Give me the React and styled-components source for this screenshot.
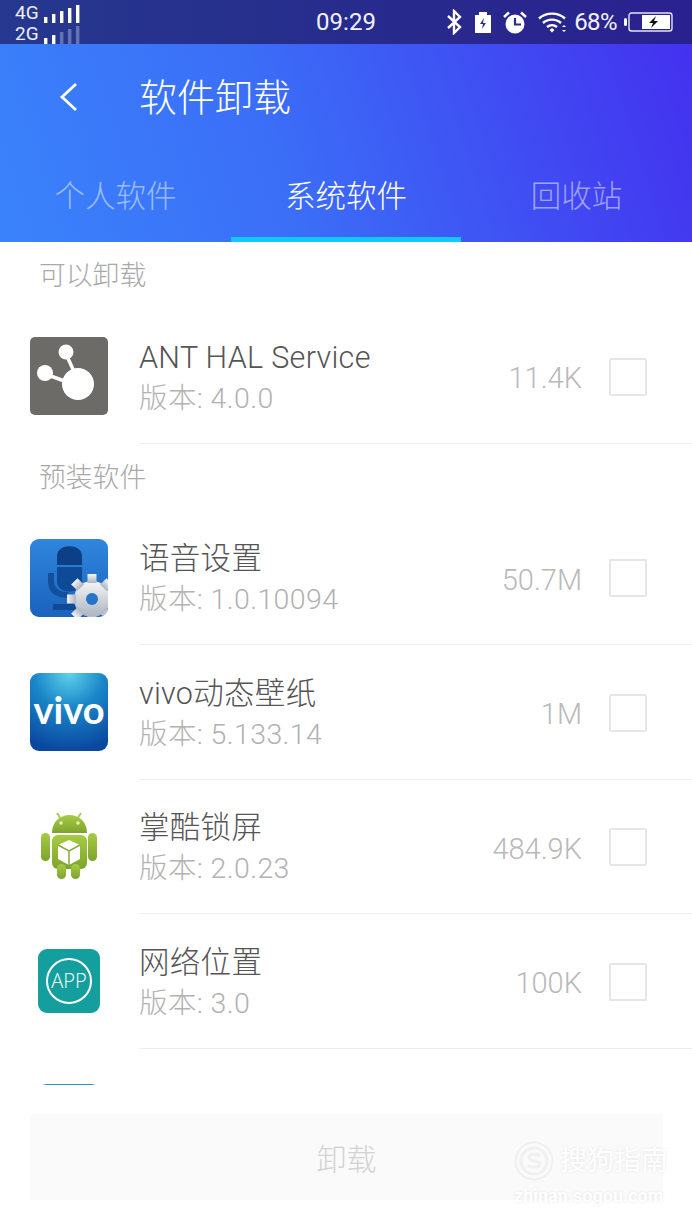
import React from 'react';
import styled, { createGlobalStyle } from 'styled-components';

const Global = createGlobalStyle`
	html, body { margin: 0; padding: 0; background: #fff; }
	* { box-sizing: border-box; }
`;

const fontStack = `Roboto, 'Noto Sans CJK SC', sans-serif`;

const Page = styled.div`
	width: 692px;
	height: 1230px;
	display: flex;
	flex-direction: column;
	overflow: hidden;
	position: relative;
	font-family: ${fontStack};
	font-weight: 300;
`;

const StatusBar = styled.div`
	height: 44px;
	flex: none;
	display: grid;
	grid-template-columns: 1fr auto 1fr;
	align-items: center;
	padding: 0 15px;
	color: #fff;
	background: linear-gradient(90deg, #26388f 0%, #272c8c 50%, #2a2190 100%);
`;

const Networks = styled.div`
	display: flex;
	flex-direction: column;
	padding-top: 1px;
`;

const NetworkRow = styled.div`
	display: flex;
	align-items: flex-end;
	gap: 5px;
	height: 21px;
	font-size: 19px;
	line-height: 21px;
	font-weight: 400;
	color: #eef0fa;
`;

const Clock = styled.div`
	font-size: 24px;
	font-weight: 400;
	color: #f2f2fa;
`;

const StatusIcons = styled.div`
	display: flex;
	align-items: center;
	justify-content: flex-end;
	margin-right: 4px;
`;

const StatusGlyph = styled.span`
	display: flex;
	margin-left: ${(props) => props.$gap || 0}px;
`;

const Percent = styled.span`
	font-size: 24px;
	font-weight: 400;
	letter-spacing: -0.6px;
	margin: 0 7px 0 6px;
	color: #f2f2fa;
`;

const Header = styled.div`
	height: 198px;
	flex: none;
	display: flex;
	flex-direction: column;
	background: linear-gradient(72deg, #3a83fb 0%, #3b6ef7 40%, #4431ef 100%);
`;

const TitleRow = styled.div`
	height: 106px;
	display: flex;
	align-items: center;
	padding-left: 59px;
`;

const Title = styled.div`
	font-size: 38px;
	color: #fff;
	margin-left: 60px;
	padding-bottom: 6px;
	font-weight: 300;
`;

const Tabs = styled.div`
	flex: 1;
	display: grid;
	grid-template-columns: 231px 230px 231px;
`;

const Tab = styled.div`
	display: flex;
	align-items: center;
	justify-content: center;
	font-size: 30.5px;
	color: ${(props) => (props.$active ? '#fff' : 'rgba(255,255,255,0.5)')};
	border-bottom: 5px solid ${(props) => (props.$active ? '#12c8f6' : 'transparent')};
`;

const List = styled.div`
	flex: 1;
	overflow: hidden;
`;

const SectionLabel = styled.div`
	height: 67px;
	padding: 0 0 4px 39px;
	display: flex;
	align-items: center;
	font-size: 26.8px;
	color: #a9a9a9;
`;

const Row = styled.div`
	height: 134.5px;
	display: flex;
	align-items: center;
	padding-left: 30px;
	position: relative;
	&::after {
		content: '';
		position: absolute;
		left: 139px;
		right: 0;
		bottom: 0;
		height: 1px;
		background: #efefef;
	}
`;

const IconBox = styled.div`
	width: 78px;
	height: 78px;
	flex: none;
	display: flex;
	align-items: center;
	justify-content: center;
	svg { display: block; }
`;

const RowText = styled.div`
	flex: 1;
	margin-left: 31px;
	padding-top: 4px;
	display: flex;
	flex-direction: column;
`;

const AppName = styled.div`
	font-size: 30.5px;
	line-height: 40px;
	letter-spacing: 0.3px;
	color: #555;
`;

const Version = styled.div`
	font-size: 28.5px;
	line-height: 41px;
	letter-spacing: 0.4px;
	color: #b2b2b2;
`;

const Size = styled.div`
	font-size: 29px;
	padding-top: 4px;
	color: #b9b9b9;
	margin-right: 27px;
`;

const Check = styled.div`
	width: 38px;
	height: 38px;
	flex: none;
	margin-right: 45px;
	margin-top: 1px;
	border: 2px solid #e6e6e6;
	border-radius: 2px;
`;

const Footer = styled.div`
	height: 145px;
	flex: none;
	padding: 29px 29px 29px 30px;
	background: #fff;
`;

const UninstallButton = styled.div`
	height: 86px;
	background: #fafafa;
	display: flex;
	align-items: center;
	justify-content: center;
	font-size: 30px;
	color: #d2d2d2;
`;

const Watermark = styled.div`
	position: absolute;
	left: 514px;
	top: 1140px;
	width: 170px;
	color: #fff;
	text-shadow: 0 0 3px rgba(0, 0, 0, 0.1);
`;

const MarkTop = styled.div`
	display: flex;
	align-items: center;
	gap: 6px;
	font-size: 27px;
	line-height: 42px;
	font-weight: 400;
`;

const MarkUrl = styled.div`
	font-size: 18px;
	line-height: 20px;
	margin-top: 4px;
	font-weight: 700;
`;

const Bars = ({ lit }) => {
	const heights = [6, 9, 12, 15, 18];
	return (
		<svg width='36' height='18' viewBox='0 0 36 18'>
			{heights.map((h, i) => (
				<rect key={i} x={i * 8} y={18 - h} width='3.4' height={h} fill='#fff' opacity={i < lit ? 1 : 0.3} />
			))}
		</svg>
	);
};

const BluetoothIcon = () => (
	<svg width='16' height='26' viewBox='0 0 16 26' fill='none' stroke='#fff' strokeWidth='2.4'>
		<path d='M2 7l12 11-6 6V2l6 6L2 19' />
	</svg>
);

const ChargeIcon = () => (
	<svg width='16' height='21' viewBox='0 0 16 21'>
		<path d='M0 3h4V0h8v3h4v18H0z' fill='#fff' />
		<path d='M9 6l-4 6h3l-1 5 4-6H8z' fill='#2a2c8c' />
	</svg>
);

const AlarmIcon = () => (
	<svg width='24' height='23' viewBox='0 0 24 23'>
		<circle cx='12' cy='13' r='9.5' fill='#fff' />
		<path d='M1 6l5-4.500M23 6l-5-4.500' stroke='#fff' strokeWidth='2.5' />
		<path d='M12 7v6.500h6' fill='none' stroke='#2a2c8c' strokeWidth='2.200' />
	</svg>
);

const WifiIcon = () => (
	<svg width='30' height='22' viewBox='0 0 30 22' fill='none' stroke='#fff' strokeWidth='2.4'>
		<path d='M1 7.500c7-6.500 19-6.500 26 0M5 12c5-4.500 13-4.500 18 0M9 16c3-2.500 7-2.500 10 0' />
		<path d='M11.500 19l2.500-2 2.500 2-2.500 2.500z' fill='#fff' stroke='none' />
		<path d='M26 14l2 2h-4zM26 21l2-2h-4z' fill='#fff' stroke='none' />
	</svg>
);

const BatteryIcon = () => (
	<svg width='49' height='20' viewBox='0 0 49 20'>
		<rect x='0' y='6' width='3' height='8' rx='1.500' fill='#fff' />
		<rect x='5' y='1' width='43' height='18' rx='2.500' fill='none' stroke='#e4e4f4' strokeWidth='1.400' />
		<rect x='18' y='3' width='28' height='14' fill='#fff' />
		<path d='M32 4l-7 7h4l-2 5 7-7h-4z' fill='#111' />
	</svg>
);

const BackIcon = () => (
	<svg width='20' height='30' viewBox='0 0 20 30' fill='none' stroke='#fff' strokeWidth='2.800'>
		<path d='M17 2L3 15l14 13' />
	</svg>
);

const AntIcon = () => (
	<svg width='78' height='78' viewBox='0 0 78 78'>
		<rect width='78' height='78' rx='5' fill='#6c6b67' />
		<path d='M36 17l10 22M15 37l25 9' stroke='#fff' strokeWidth='3.500' />
		<circle cx='36' cy='15' r='7.500' fill='#fff' />
		<circle cx='15' cy='36' r='8' fill='#fff' />
		<circle cx='48' cy='47' r='16' fill='#fff' />
	</svg>
);

const VoiceIcon = () => (
	<svg width='78' height='78' viewBox='0 0 78 78'>
		<defs>
			<linearGradient id='voiceBg' x1='0' y1='0' x2='0' y2='1'>
				<stop offset='0' stopColor='#2f86dc' />
				<stop offset='1' stopColor='#1b62bd' />
			</linearGradient>
			<linearGradient id='gearBg' x1='0' y1='0' x2='0' y2='1'>
				<stop offset='0' stopColor='#f6f6f6' />
				<stop offset='1' stopColor='#aab4c0' />
			</linearGradient>
			<clipPath id='voiceClip'>
				<rect width='78' height='78' rx='9' />
			</clipPath>
		</defs>
		<g clipPath='url(#voiceClip)'>
			<rect width='78' height='78' fill='url(#voiceBg)' />
			<path d='M18 34v9c0 11 9 16 20 16v-6c-8 0-14-3-14-11v-8z' fill='#12509e' />
			<path d='M27 26V17c0-13 25-13 25 0v9z' fill='#0c3f86' />
			<path d='M27 28h25v14c0 14-25 14-25 0z' fill='#0f4a96' />
			<rect x='23' y='65' width='28' height='6' fill='#0f4a96' />
			<g fill='url(#gearBg)'>
				<circle cx='62' cy='60' r='18' />
				{[0, 45, 90, 135, 180, 225, 270, 315].map((a) => (
					<rect key={a} x='57.500' y='35' width='9' height='9' transform={`rotate(${a} 62 60)`} />
				))}
			</g>
			<circle cx='62' cy='60' r='6' fill='#2474c8' />
		</g>
	</svg>
);

const VivoIcon = () => (
	<svg width='78' height='78' viewBox='0 0 78 78'>
		<defs>
			<radialGradient id='vivoBg' cx='0.5' cy='0' r='1'>
				<stop offset='0' stopColor='#5ed2ec' />
				<stop offset='0.45' stopColor='#1a86c8' />
				<stop offset='1' stopColor='#0a48a0' />
			</radialGradient>
		</defs>
		<rect width='78' height='78' rx='9' fill='url(#vivoBg)' />
		<text x='39' y='51' textAnchor='middle' fontFamily='Lato, sans-serif' fontWeight='700' fontSize='38' fill='#fff'>vivo</text>
	</svg>
);

const AndroidIcon = () => (
	<svg width='78' height='78' viewBox='0 0 78 78'>
		<defs>
			<linearGradient id='droid' x1='0' y1='0' x2='0' y2='1'>
				<stop offset='0' stopColor='#a6cc44' />
				<stop offset='1' stopColor='#7ea32c' />
			</linearGradient>
		</defs>
		<path d='M31 11l-4-6M47 11l4-6' stroke='#a9c964' strokeWidth='2' />
		<path d='M22 25c0-24 35-24 35 0z' fill='url(#droid)' />
		<circle cx='31' cy='15' r='1.800' fill='#e4f0b8' />
		<circle cx='48' cy='15' r='1.800' fill='#e4f0b8' />
		<rect x='22' y='27' width='35' height='34' rx='6' fill='url(#droid)' />
		<rect x='11' y='25' width='9' height='28' rx='4.500' fill='url(#droid)' />
		<rect x='58' y='25' width='9' height='28' rx='4.500' fill='url(#droid)' />
		<rect x='27' y='56' width='9' height='15' rx='4.500' fill='url(#droid)' />
		<rect x='41' y='56' width='9' height='15' rx='4.500' fill='url(#droid)' />
		<path d='M39 32l11 5v14l-11 6-11-6V37z' fill='#fff' />
		<path d='M28 37l11 6 11-6M39 43v14' fill='none' stroke='#8aa83c' strokeWidth='1.500' />
	</svg>
);

const AppIcon = () => (
	<svg width='62' height='64' viewBox='0 0 62 64'>
		<rect width='62' height='64' rx='9' fill='#149e9e' />
		<circle cx='31' cy='32' r='22' fill='none' stroke='#fff' strokeWidth='2' />
		<text x='31' y='39' textAnchor='middle' fontFamily="'Open Sans', sans-serif" fontSize='20' fill='#fff'>APP</text>
	</svg>
);

const ClippedIcon = () => (
	<svg width='62' height='64' viewBox='0 0 62 64'>
		<rect width='62' height='64' rx='9' fill='#2f8fc8' />
	</svg>
);

const SearchLogo = () => (
	<svg width='40' height='40' viewBox='0 0 40 40' fill='none' stroke='#f0f0f0' strokeWidth='2'>
		<circle cx='20' cy='20' r='18.500' />
		<circle cx='20' cy='20' r='13' strokeWidth='3' />
		<path d='M26 15c-4-3-12-2-11 2s11 2 11 6-8 4-12 2' strokeWidth='3' />
	</svg>
);

const AppRow = ({ icon, name, version, size }) => (
	<Row>
		<IconBox>{icon}</IconBox>
		<RowText>
			<AppName>{name}</AppName>
			<Version>版本: {version}</Version>
		</RowText>
		<Size>{size}</Size>
		<Check />
	</Row>
);

const App = () => {
	return (
		<Page>
			<Global />
			<StatusBar>
				<Networks>
					<NetworkRow>4G <Bars lit={5} /></NetworkRow>
					<NetworkRow>2G <Bars lit={2} /></NetworkRow>
				</Networks>
				<Clock>09:29</Clock>
				<StatusIcons>
					<StatusGlyph><BluetoothIcon /></StatusGlyph>
					<StatusGlyph $gap={13}><ChargeIcon /></StatusGlyph>
					<StatusGlyph $gap={12}><AlarmIcon /></StatusGlyph>
					<StatusGlyph $gap={11}><WifiIcon /></StatusGlyph>
					<Percent>68%</Percent>
					<BatteryIcon />
				</StatusIcons>
			</StatusBar>
			<Header>
				<TitleRow>
					<BackIcon />
					<Title>软件卸载</Title>
				</TitleRow>
				<Tabs>
					<Tab>个人软件</Tab>
					<Tab $active>系统软件</Tab>
					<Tab>回收站</Tab>
				</Tabs>
			</Header>
			<List>
				<SectionLabel>可以卸载</SectionLabel>
				<AppRow icon={<AntIcon />} name='ANT HAL Service' version='4.0.0' size='11.4K' />
				<SectionLabel>预装软件</SectionLabel>
				<AppRow icon={<VoiceIcon />} name='语音设置' version='1.0.10094' size='50.7M' />
				<AppRow icon={<VivoIcon />} name='vivo动态壁纸' version='5.133.14' size='1M' />
				<AppRow icon={<AndroidIcon />} name='掌酷锁屏' version='2.0.23' size='484.9K' />
				<AppRow icon={<AppIcon />} name='网络位置' version='3.0' size='100K' />
				<Row>
					<IconBox>
						<ClippedIcon />
					</IconBox>
				</Row>
			</List>
			<Footer>
				<UninstallButton>卸载</UninstallButton>
			</Footer>
			<Watermark>
				<MarkTop>
					<SearchLogo />
					<span>搜狗指南</span>
				</MarkTop>
				<MarkUrl>zhinan.sogou.com</MarkUrl>
			</Watermark>
		</Page>
	);
};

export default App;
